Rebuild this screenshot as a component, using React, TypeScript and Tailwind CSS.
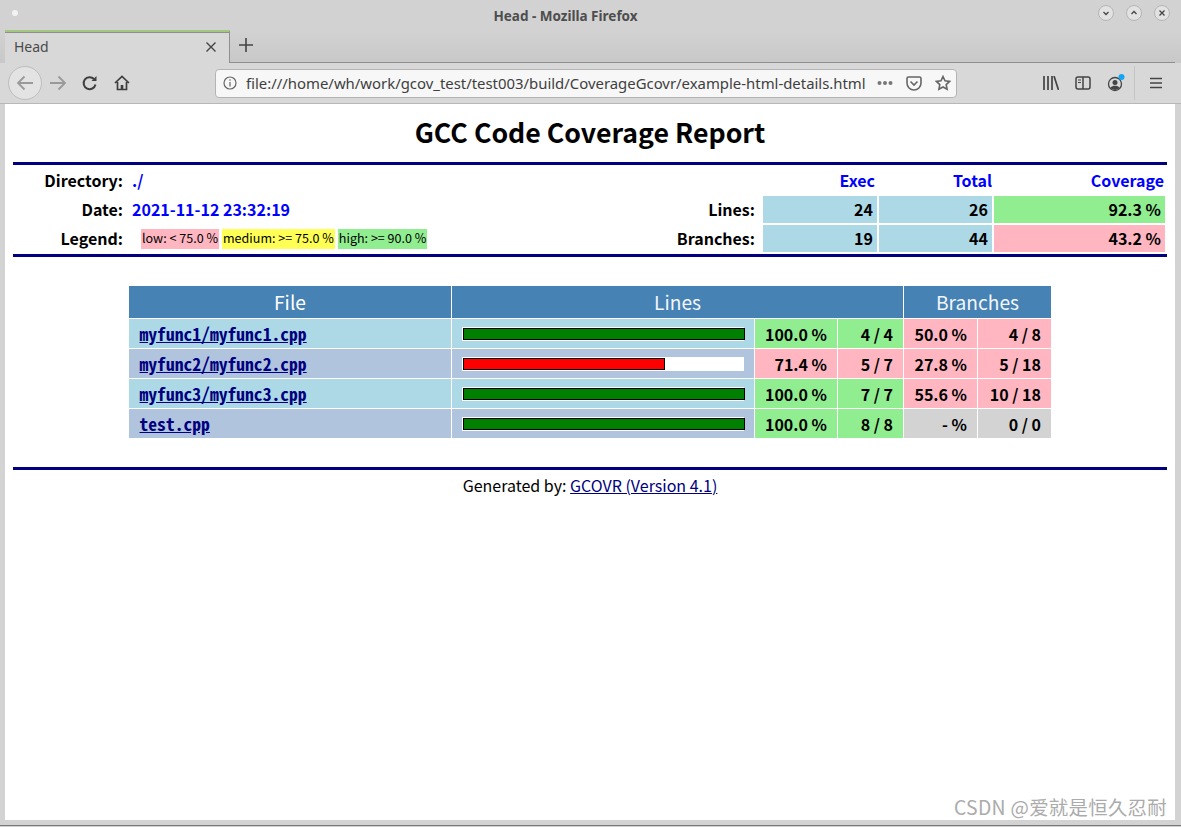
import React from "react";

const BODY = "font-['Noto_Sans_CJK_SC','Noto_Sans',sans-serif]";

function Bar({ width, color }: { width: number; color: string }) {
  return (
    <div className="mt-px h-[14px] w-[282px] bg-white py-px pl-px">
      <div className="h-[12px] border border-black" style={{ width, backgroundColor: color }} />
    </div>
  );
}

function Num({ bg, children }: { bg: string; children: React.ReactNode }) {
  return <div className={`${bg} flex items-center justify-end pr-[10px] font-bold text-[16px] text-black`}>{children}</div>;
}

const rows = [
  { name: "myfunc1/myfunc1.cpp", width: 282, color: "green", bg: "bg-[#add8e6]", a: "100.0 %", b: "4 / 4", c: "50.0 %", d: "4 / 8", ac: "bg-[#90ee90]", cc: "bg-[#ffb6c1]" },
  { name: "myfunc2/myfunc2.cpp", width: 202, color: "red", bg: "bg-[#b0c4de]", a: "71.4 %", b: "5 / 7", c: "27.8 %", d: "5 / 18", ac: "bg-[#ffb6c1]", cc: "bg-[#ffb6c1]" },
  { name: "myfunc3/myfunc3.cpp", width: 282, color: "green", bg: "bg-[#add8e6]", a: "100.0 %", b: "7 / 7", c: "55.6 %", d: "10 / 18", ac: "bg-[#90ee90]", cc: "bg-[#ffb6c1]" },
  { name: "test.cpp", width: 282, color: "green", bg: "bg-[#b0c4de]", a: "100.0 %", b: "8 / 8", c: "- %", d: "0 / 0", ac: "bg-[#90ee90]", cc: "bg-[#d3d3d3]" },
];

function TitleBtn({ children }: { children: React.ReactNode }) {
  return (
    <div className="flex h-[16px] w-[16px] items-center justify-center rounded-full border border-[#b5b5b5] bg-[#e2e2e2]">
      <svg width="10" height="10" viewBox="0 0 10 10" fill="none" stroke="#444" strokeWidth="1.3">{children}</svg>
    </div>
  );
}

export default function App() {
  return (
    <div className={`${BODY} flex h-[827px] w-[1181px] flex-col overflow-hidden bg-[#d3d3d3]`}>
      {/* title bar */}
      <div className="relative flex h-[30px] shrink-0 items-center justify-center bg-[#d2d2d2] pt-[2px] pr-[50px]">
        <div className="absolute left-[12px] top-[10px] h-[6px] w-[6px] rounded-full bg-[#f3f3f3]" />
        <span className="font-['Noto_Sans',sans-serif] text-[13.5px] font-bold text-[#4d4d4d]">Head - Mozilla Firefox</span>
        <div className="absolute right-[11px] top-[5px] flex gap-[12px]">
          <TitleBtn><path d="M2.5 4l2.5 2.5L7.5 4" /></TitleBtn>
          <TitleBtn><path d="M2.5 6L5 3.5 7.5 6" /></TitleBtn>
          <TitleBtn><path d="M2.5 2.5l5 5M7.5 2.5l-5 5" /></TitleBtn>
        </div>
      </div>
      {/* tab bar */}
      <div className="flex h-[33px] shrink-0 bg-gradient-to-b from-[#d2d2d2] to-[#c8c8c8] pl-[5px] pr-[6px] font-['Noto_Sans',sans-serif]">
        <div className="flex h-[33px] w-[225px] items-center justify-between border-r border-t-[2px] border-r-[#8f8f8f] border-t-[#a4c77f] bg-[#d8d8d8] pb-[2px] pl-[9px] pr-[12px] shadow-[inset_0_1px_0_#8f8f8f]">
          <span className="text-[14px] text-[#4a4a4a]">Head</span>
          <svg width="12" height="12" viewBox="0 0 12 12" stroke="#444" strokeWidth="1.4"><path d="M1.5 1.5l9 9M10.5 1.5l-9 9" /></svg>
        </div>
        <div className="flex flex-1 items-center border-b border-[#8f8f8f] pb-[2px] pl-[9px]">
          <svg width="14" height="14" viewBox="0 0 14 14" stroke="#444" strokeWidth="1.6"><path d="M7 0v14M0 7h14" /></svg>
        </div>
      </div>
      {/* nav bar */}
      <div className="flex h-[40px] shrink-0 items-center bg-[#d8d8d8] pl-[3px] pr-[6px] font-['Noto_Sans',sans-serif]">
        <div className="ml-[5px] flex h-[34px] w-[34px] items-center justify-center rounded-full border border-[#bdbdbd] bg-[#e3e3e3]">
          <svg width="18" height="16" viewBox="0 0 18 16" fill="none" stroke="#9a9a9a" strokeWidth="1.8"><path d="M17 8H2M8.5 1.5L2 8l6.5 6.5" /></svg>
        </div>
        <svg className="ml-[7px]" width="18" height="16" viewBox="0 0 18 16" fill="none" stroke="#9a9a9a" strokeWidth="1.8"><path d="M1 8h15M9.5 1.5L16 8l-6.5 6.5" /></svg>
        <svg className="ml-[15px]" width="16" height="16" viewBox="0 0 16 16" fill="none" stroke="#3f3f3f" strokeWidth="2"><path d="M13.5 9.5A6 6 0 1 1 12 4" /><path d="M14.5 1v5h-5z" fill="#3f3f3f" stroke="none" /></svg>
        <svg className="ml-[16px]" width="16" height="16" viewBox="0 0 16 16" fill="none" stroke="#3f3f3f" strokeWidth="1.7"><path d="M1 8l7-6.5L15 8M3.5 7v7.5h9V7" /><path d="M6.7 14.5V10h2.6v4.5" fill="#3f3f3f" stroke="none" /></svg>
        <div className="ml-[85px] flex h-[29px] w-[742px] items-center rounded-[4px] border border-[#b4b4b4] bg-[#f7f7f7] pl-[7px] pr-[5px]">
          <svg width="14" height="14" viewBox="0 0 14 14" fill="none" stroke="#666" strokeWidth="1.2"><circle cx="7" cy="7" r="6" /><path d="M7 6v4.5M7 3.2v1.6" /></svg>
          <span className="ml-[9px] whitespace-nowrap text-[14.9px] text-[#3f3f3f]">file:///home/wh/work/gcov_test/test003/build/CoverageGcovr/example-html-details.html</span>
          <div className="ml-auto flex items-center gap-[13px]">
            <svg width="16" height="6" viewBox="0 0 16 6" fill="#777"><circle cx="2.5" cy="3" r="2" /><circle cx="8" cy="3" r="2" /><circle cx="13.5" cy="3" r="2" /></svg>
            <svg width="16" height="15" viewBox="0 0 16 15" fill="none" stroke="#666" strokeWidth="1.6"><path d="M2.5 1h11A1.5 1.5 0 0 1 15 2.500V7A7 7 0 0 1 1 7V2.500A1.500 1.500 0 0 1 2.500 1z" /><path d="M4.500 5.500L8 9l3.500-3.500" /></svg>
            <svg width="16" height="16" viewBox="0 0 16 16" fill="none" stroke="#666" strokeWidth="1.6"><path d="M8 1.500l2 4.300 4.600.6-3.400 3.200.9 4.700L8 12l-4.100 2.300.9-4.700L1.400 6.400 6 5.800z" /></svg>
          </div>
        </div>
        <svg className="ml-[86px]" width="16" height="14" viewBox="0 0 16 14" fill="none" stroke="#444" strokeWidth="1.7"><path d="M1 0v14M5 0v14M9 0v14M11 0l4.500 14" /></svg>
        <svg className="ml-[16px]" width="16" height="14" viewBox="0 0 16 14" fill="none" stroke="#444" strokeWidth="1.5"><rect x="1" y="1" width="14" height="12" rx="2" /><path d="M8 1v12" /><path d="M3 4h3M3 6.500h3" strokeWidth="1" /></svg>
        <svg className="ml-[16px]" width="18" height="18" viewBox="0 0 18 18" fill="none"><circle cx="8" cy="10" r="6.500" stroke="#444" strokeWidth="1.300" /><circle cx="8" cy="8.500" r="2.500" fill="#444" /><path d="M3.500 13.500c2-2.500 7-2.500 9 0v1l-4.500 1.500-4.500-1.500z" fill="#444" /><circle cx="14.500" cy="3" r="3" fill="#12a5f5" /></svg>
        <div className="ml-[9px] h-[34px] w-px bg-[#c4c4c4]" />
        <svg className="ml-[15px]" width="12" height="12" viewBox="0 0 12 12" stroke="#444" strokeWidth="1.600"><path d="M0 1.500h12M0 6h12M0 10.500h12" /></svg>
        <div className="w-[5px]" />
      </div>
      <div className="h-px shrink-0 bg-[#b8b8b8]" />
      {/* page */}
      <div className="relative ml-[5px] mr-[6px] h-[716px] shrink-0 bg-white px-[8px] text-black">
        <h1 className="flex h-[58px] items-center justify-center pb-[2px] text-[26.7px] font-bold leading-none text-black">GCC Code Coverage Report</h1>
        <div className="h-[3px] bg-[#000080]" />
        <div className="flex justify-between pr-[2px] pt-[2px] text-[16px] font-bold leading-none">
          <div className="grid grid-cols-[110px_auto] grid-rows-[27px_27px_27px] gap-x-[9px] gap-y-[2px] items-center">
            <div className="pb-[2px] text-right">Directory:</div>
            <div className="pb-[2px] text-[#0000ff]">./</div>
            <div className="pb-[2px] text-right">Date:</div>
            <div className="pb-[2px] text-[#0000ff]">2021-11-12 23:32:19</div>
            <div className="pb-[2px] text-right">Legend:</div>
            <div className="flex gap-[3px] pl-[9px] text-[12.55px] font-normal">
              <span className="flex h-[20px] items-center bg-[#ffb6c1] px-px">low: &lt; 75.0 %</span>
              <span className="flex h-[20px] items-center bg-[#ffff55] px-px">medium: &gt;= 75.0 %</span>
              <span className="flex h-[20px] items-center bg-[#90ee90] px-px">high: &gt;= 90.0 %</span>
            </div>
          </div>
          <div className="grid grid-cols-[100px_114px_113px_171px] grid-rows-[27px_27px_27px] gap-x-[2px] gap-y-[2px] items-stretch">
            <div />
            <div className="flex items-center justify-end pb-[2px] pr-[2px] text-[#0000ff]">Exec</div>
            <div className="flex items-center justify-end pb-[2px] text-[#0000ff]">Total</div>
            <div className="flex items-center justify-end pb-[2px] pr-[1px] text-[#0000ff]">Coverage</div>
            <div className="flex items-center justify-end pb-[2px] pr-[6px]">Lines:</div>
            <div className="flex items-center justify-end bg-[#add8e6] pb-[2px] pr-[4px]">24</div>
            <div className="flex items-center justify-end bg-[#add8e6] pb-[2px] pr-[4px]">26</div>
            <div className="flex items-center justify-end bg-[#90ee90] pb-[2px] pr-[4px]">92.3 %</div>
            <div className="flex items-center justify-end pb-[2px] pr-[6px]">Branches:</div>
            <div className="flex items-center justify-end bg-[#add8e6] pb-[2px] pr-[4px]">19</div>
            <div className="flex items-center justify-end bg-[#add8e6] pb-[2px] pr-[4px]">44</div>
            <div className="flex items-center justify-end bg-[#ffb6c1] pb-[2px] pr-[4px]">43.2 %</div>
          </div>
        </div>
        <div className="mt-[2px] h-[3px] bg-[#000080]" />
        <div className="mt-[29px] ml-[116px] grid w-[922px] grid-cols-[322px_302px_82px_65px_73px_73px] grid-rows-[32px_29px_29px_29px_29px] gap-px">
          <div className="flex items-center justify-center bg-[#4682b4] text-[19.2px] text-white">File</div>
          <div className="col-span-3 flex items-center justify-center bg-[#4682b4] text-[19.2px] text-[#f2f6fa]">Lines</div>
          <div className="col-span-2 flex items-center justify-center bg-[#4682b4] text-[19.2px] text-[#f2f6fa]">Branches</div>
          {rows.map((r) => (
            <React.Fragment key={r.name}>
              <div className={`${r.bg} flex items-center pl-[10.5px]`}>
                <a className="font-['Noto_Sans_Mono_CJK_SC','Noto_Sans_Mono','DejaVu_Sans_Mono',monospace] text-[17.6px] font-bold leading-none text-[#000080] underline">{r.name}</a>
              </div>
              <div className={`${r.bg} flex items-center pl-[10px]`}>
                <Bar width={r.width} color={r.color} />
              </div>
              <Num bg={r.ac}>{r.a}</Num>
              <Num bg={r.ac}>{r.b}</Num>
              <Num bg={r.cc}>{r.c}</Num>
              <Num bg={r.cc}>{r.d}</Num>
            </React.Fragment>
          ))}
        </div>
        <div className="mt-[29px] h-[3px] bg-[#000080]" />
        <div className="flex h-[31px] items-center justify-center pb-[2px] text-[16px] leading-none">
          <span>Generated by:&nbsp;<a className="text-[#000080] underline">GCOVR (Version 4.1)</a></span>
        </div>
        <div className="absolute bottom-[1px] right-[8px] whitespace-nowrap text-[19.4px] leading-[24px] tracking-[0.3px] text-[#ababab]">CSDN @爱就是恒久忍耐</div>
      </div>
      <div className="mt-[5px] h-[1px] shrink-0 bg-[#777]" />
    </div>
  );
}
